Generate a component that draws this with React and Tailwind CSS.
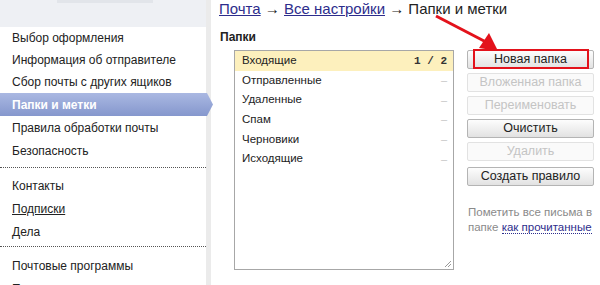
import React from 'react';

const font = { fontFamily: '"Liberation Sans", Arial, sans-serif' };

const menuTop = [
  { label: 'Выбор оформления', h: 'h-[22px]' },
  { label: 'Информация об отправителе', h: 'h-[22px]' },
  { label: 'Сбор почты с других ящиков', h: 'h-[22px]' },
  { label: 'Папки и метки', h: 'h-[23px]', active: true },
  { label: 'Правила обработки почты', h: 'h-[23px]' },
  { label: 'Безопасность', h: 'h-[23px]' },
];

const folders = [
  { name: 'Входящие', count: '1 / 2', active: true },
  { name: 'Отправленные' },
  { name: 'Удаленные' },
  { name: 'Спам' },
  { name: 'Черновики' },
  { name: 'Исходящие' },
];

function MenuItem({ label, h, active, underline }) {
  if (active) {
    return (
      <div
        className={`${h} shrink-0 mr-[-7px] flex items-center pl-3 text-[12px] font-bold text-white bg-gradient-to-b from-[#aab8e2] to-[#8597cd] [clip-path:polygon(0_0,calc(100%-6px)_0,100%_50%,calc(100%-6px)_100%,0_100%)]`}
      >
        {label}
      </div>
    );
  }
  return (
    <div className={`${h} shrink-0 flex items-center pl-3 text-[12px] text-[#222]`}>
      <span className={underline ? 'underline' : ''}>{label}</span>
    </div>
  );
}

function Btn({ children, disabled, highlight, className = '' }) {
  return (
    <div
      className={`relative shrink-0 h-[19px] w-[127px] flex items-center justify-center rounded-[2px] border text-[12.5px] ${
        disabled
          ? 'border-[#e2e2e2] bg-[#fafafa] text-[#c4c4c4]'
          : 'border-[#b4b4b4] bg-gradient-to-b from-[#fdfdfd] to-[#e2e2e2] text-[#222]'
      } ${className}`}
    >
      {children}
      {highlight && (
        <div className="absolute left-[5px] right-[4px] top-[-2px] bottom-[-1px] border-2 border-[#e3121b]" />
      )}
    </div>
  );
}

export default function App() {
  return (
    <div className="relative w-[600px] h-[285px] overflow-hidden bg-white" style={font}>
      <div className="flex h-full">
        {/* sidebar */}
        <div className="flex h-full shrink-0">
          <div className="w-[206px] flex flex-col relative z-10">
            <div className="h-[27px] bg-[#eef0f4] shrink-0 relative">
              <div className="absolute left-[57px] top-0 w-[96px] h-[3px] bg-[#e2e5ea]" />
            </div>
            {menuTop.map((m) => (
              <MenuItem key={m.label} {...m} />
            ))}
            <div className="shrink-0 mt-[5px] border-t border-dotted border-[#555]" />
            <div className="shrink-0 mt-[6px] flex flex-col">
              <MenuItem label="Контакты" h="h-[23px]" />
              <MenuItem label="Подписки" h="h-[23px]" underline />
              <MenuItem label="Дела" h="h-[23px]" />
            </div>
            <div className="shrink-0 mt-[3px] border-t border-dotted border-[#555]" />
            <div className="shrink-0 mt-[7px] flex flex-col">
              <MenuItem label="Почтовые программы" h="h-[23px]" />
              <MenuItem label="Переводчик" h="h-[23px]" />
            </div>
          </div>
          <div className="w-[5px] h-full bg-[#ebebeb]" />
        </div>

        {/* main */}
        <div className="flex-1 pl-[8px]">
          <div className="mt-[-2px] h-[21px] text-[15px] text-[#222] whitespace-nowrap">
            <span className="underline text-[#2d2d8c]">Почта</span>
            {' → '}
            <span className="underline text-[#2d2d8c]">Все настройки</span>
            {' → Папки и метки'}
          </div>
          <div className="mt-[9px] pl-[1px] text-[12px] font-bold text-[#222]">Папки</div>

          <div className="mt-[4px] flex">
            <div className="ml-[15px] relative w-[220px] h-[220px] border border-[#a7a7a7]">
              {folders.map((f) => (
                <div
                  key={f.name}
                  className={`h-[19.6px] flex items-center justify-between pl-[7px] pr-[6px] text-[11.5px] text-[#222] ${
                    f.active ? 'bg-[#fdf0bd]' : ''
                  }`}
                >
                  <span>{f.name}</span>
                  {f.count ? (
                    <span className="text-[11px] font-bold text-[#333]" style={{ fontFamily: '"Liberation Mono", monospace' }}>
                      {f.count}
                    </span>
                  ) : (
                    <span className="text-[11px] text-[#c8c8c8]">–</span>
                  )}
                </div>
              ))}
              <svg className="absolute right-[1px] bottom-[1px]" width="8" height="8" viewBox="0 0 8 8">
                <path d="M7 1L1 7M7 4L4 7" stroke="#9a9a9a" strokeWidth="1" />
              </svg>
            </div>

            <div className="ml-[13px] flex flex-col">
              <Btn highlight>Новая папка</Btn>
              <Btn disabled className="mt-[4px]">Вложенная папка</Btn>
              <Btn disabled className="mt-[4px]">Переименовать</Btn>
              <Btn className="mt-[4px]">Очистить</Btn>
              <Btn disabled className="mt-[4px]">Удалить</Btn>
              <Btn className="mt-[6px]">Создать правило</Btn>
              <div className="mt-[19px] pl-[1px] text-[11.5px] leading-[15px] text-[#8a8a8a] whitespace-nowrap">
                Пометить все письма в
                <br />
                папке{' '}
                <span className="text-[#2d2d8c] border-b border-dotted border-[#2d2d8c]">как прочитанные</span>
              </div>
            </div>
          </div>
        </div>
      </div>

      {/* red annotation arrow */}
      <svg className="absolute left-0 top-0 pointer-events-none" width="600" height="285">
        <line x1="436" y1="16" x2="486" y2="42" stroke="#e3121b" strokeWidth="3" />
        <polygon points="498,51 479,48 489,33" fill="#e3121b" />
      </svg>
    </div>
  );
}
